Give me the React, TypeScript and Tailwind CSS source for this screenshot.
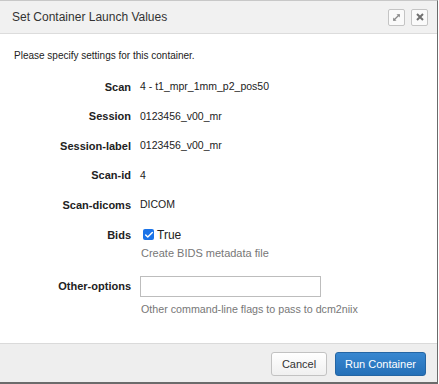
import { Check } from 'lucide-react'

const rows = [
  { label: 'Scan', value: '4 - t1_mpr_1mm_p2_pos50' },
  { label: 'Session', value: '0123456_v00_mr' },
  { label: 'Session-label', value: '0123456_v00_mr' },
  { label: 'Scan-id', value: '4' },
  { label: 'Scan-dicoms', value: 'DICOM' },
]

export default function App() {
  return (
    <div className="w-[439px] h-[384px] bg-white" style={{ fontFamily: '"Liberation Sans", Arial, sans-serif' }}>
      <div className="w-[438px] h-[384px] flex flex-col border-t border-[#c8c8c8] border-r border-b-2 border-r-[#6b6b6b] border-b-[#6b6b6b] bg-white">
        {/* Header */}
        <div className="h-[33px] shrink-0 flex items-center justify-between bg-[#f1f1f1] border-b border-[#dcdcdc] pl-[12px] pr-[9px]">
          <span className="text-[12px] text-[#333]">Set Container Launch Values</span>
          <div className="flex gap-[6px]">
            <button className="w-[17px] h-[17px] flex items-center justify-center border border-[#c4c4c4] rounded-[2px] bg-[#fafafa]">
              <svg width="9" height="9" viewBox="0 0 9 9" fill="none" stroke="#8a8a8a" strokeWidth="1.2">
                <path d="M1.5 7.5 L7.5 1.5" />
                <path d="M4.5 1.2 H7.8 V4.5" fill="#8a8a8a" stroke="none" />
                <path d="M1.2 4.5 V7.8 H4.5" fill="#8a8a8a" stroke="none" />
              </svg>
            </button>
            <button className="w-[17px] h-[17px] flex items-center justify-center border border-[#c4c4c4] rounded-[2px] bg-[#fafafa]">
              <svg width="8" height="8" viewBox="0 0 8 8" stroke="#6f6f6f" strokeWidth="2">
                <path d="M1 1 L7 7 M7 1 L1 7" />
              </svg>
            </button>
          </div>
        </div>

        {/* Body */}
        <div className="flex-1 text-[10.5px] text-[#222]">
          <p className="pl-[14px] pt-[15px] leading-[14px] text-[10px]">Please specify settings for this container.</p>
          <div className="mt-[9px]">
            {rows.map((r) => (
              <div key={r.label} className="flex items-center h-[29.6px]">
                <span className="w-[131px] text-right font-bold text-[11px]">{r.label}</span>
                <span className="ml-[9px]">{r.value}</span>
              </div>
            ))}
            <div className="flex items-center h-[29.6px]">
              <span className="w-[131px] text-right font-bold text-[11px]">Bids</span>
              <label className="ml-[12px] flex items-center gap-[3px]">
                <span className="w-[11px] h-[11px] rounded-[2px] bg-[#1a73e8] flex items-center justify-center">
                  <Check size={10} strokeWidth={3.5} color="white" />
                </span>
                <span className="text-[12px]">True</span>
              </label>
            </div>
            <div className="pl-[141px] text-[#777] text-[11px] leading-[12px] -mt-[3px]">Create BIDS metadata file</div>
            <div className="flex items-center mt-[17px]">
              <span className="w-[131px] text-right font-bold text-[11px]">Other-options</span>
              <input className="ml-[9px] w-[181px] h-[21px] border border-[#bdbdbd] outline-none" />
            </div>
            <div className="pl-[141px] text-[#777] text-[10.7px] leading-[12px] mt-[6px]">Other command-line flags to pass to dcm2niix</div>
          </div>
        </div>

        {/* Footer */}
        <div className="h-[39px] shrink-0 flex items-start justify-end gap-[8px] pt-[8px] pr-[11px] bg-[#eeeeee] border-t border-[#dadada]">
          <button className="w-[56px] h-[24px] text-[11px] text-[#333] border border-[#c2c2c2] rounded-[3px] bg-gradient-to-b from-white to-[#f0f0f0]">
            Cancel
          </button>
          <button className="w-[91px] h-[24px] text-[11px] text-white border border-[#2465a3] rounded-[3px] bg-gradient-to-b from-[#3887d0] to-[#2470b8]">
            Run Container
          </button>
        </div>
      </div>
    </div>
  )
}
